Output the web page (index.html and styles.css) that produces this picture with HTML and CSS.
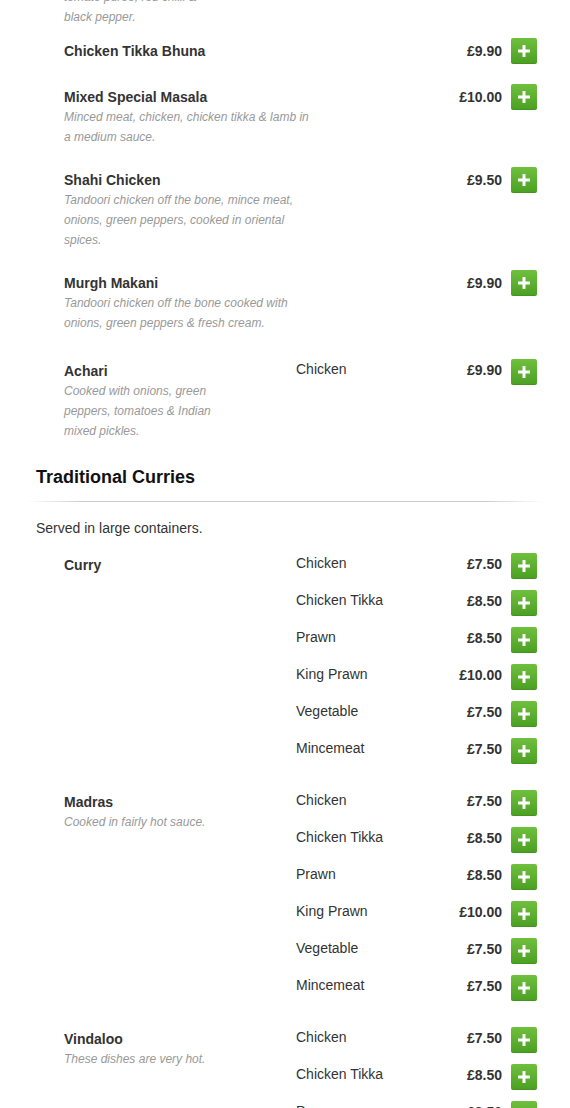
FILE: index.html
```html
<!DOCTYPE html>
<html lang="en">
<head>
<meta charset="utf-8">
<title>Menu</title>
<link rel="stylesheet" href="styles.css">
</head>
<body>
<div class="menu">
  <div class="partial">
    <p class="desc">tomato puree, red chilli &amp;<br>black pepper.</p>
  </div>

  <div class="item">
    <div class="info"><div class="name">Chicken Tikka Bhuna</div></div>
    <div class="buy"><span class="price">£9.90</span><button class="add" aria-label="Add"><svg viewBox="0 0 26 26" width="26" height="26"><rect x="7" y="11.5" width="12" height="3" fill="#fff"/><rect x="11.5" y="7" width="3" height="12" fill="#fff"/></svg></button></div>
  </div>

  <div class="item">
    <div class="info"><div class="name">Mixed Special Masala</div><p class="desc">Minced meat, chicken, chicken tikka &amp; lamb in a medium sauce.</p></div>
    <div class="buy"><span class="price">£10.00</span><button class="add" aria-label="Add"><svg viewBox="0 0 26 26" width="26" height="26"><rect x="7" y="11.5" width="12" height="3" fill="#fff"/><rect x="11.5" y="7" width="3" height="12" fill="#fff"/></svg></button></div>
  </div>

  <div class="item">
    <div class="info"><div class="name">Shahi Chicken</div><p class="desc">Tandoori chicken off the bone, mince meat, onions, green peppers, cooked in oriental spices.</p></div>
    <div class="buy"><span class="price">£9.50</span><button class="add" aria-label="Add"><svg viewBox="0 0 26 26" width="26" height="26"><rect x="7" y="11.5" width="12" height="3" fill="#fff"/><rect x="11.5" y="7" width="3" height="12" fill="#fff"/></svg></button></div>
  </div>

  <div class="item">
    <div class="info"><div class="name">Murgh Makani</div><p class="desc">Tandoori chicken off the bone cooked with onions, green peppers &amp; fresh cream.</p></div>
    <div class="buy"><span class="price">£9.90</span><button class="add" aria-label="Add"><svg viewBox="0 0 26 26" width="26" height="26"><rect x="7" y="11.5" width="12" height="3" fill="#fff"/><rect x="11.5" y="7" width="3" height="12" fill="#fff"/></svg></button></div>
  </div>

  <div class="vitem first">
    <div class="vinfo"><div class="name">Achari</div><p class="desc">Cooked with onions, green peppers, tomatoes &amp; Indian mixed pickles.</p></div>
    <div class="vars">
      <div class="vrow"><span class="vname">Chicken</span><span class="price">£9.90</span><button class="add" aria-label="Add"><svg viewBox="0 0 26 26" width="26" height="26"><rect x="7" y="11.5" width="12" height="3" fill="#fff"/><rect x="11.5" y="7" width="3" height="12" fill="#fff"/></svg></button></div>
    </div>
  </div>

  <h2 class="section-title">Traditional Curries</h2>
  <hr class="divider">
  <p class="section-note">Served in large containers.</p>

  <div class="vitem">
    <div class="vinfo"><div class="name">Curry</div></div>
    <div class="vars">
      <div class="vrow"><span class="vname">Chicken</span><span class="price">£7.50</span><button class="add" aria-label="Add"><svg viewBox="0 0 26 26" width="26" height="26"><rect x="7" y="11.5" width="12" height="3" fill="#fff"/><rect x="11.5" y="7" width="3" height="12" fill="#fff"/></svg></button></div>
      <div class="vrow"><span class="vname">Chicken Tikka</span><span class="price">£8.50</span><button class="add" aria-label="Add"><svg viewBox="0 0 26 26" width="26" height="26"><rect x="7" y="11.5" width="12" height="3" fill="#fff"/><rect x="11.5" y="7" width="3" height="12" fill="#fff"/></svg></button></div>
      <div class="vrow"><span class="vname">Prawn</span><span class="price">£8.50</span><button class="add" aria-label="Add"><svg viewBox="0 0 26 26" width="26" height="26"><rect x="7" y="11.5" width="12" height="3" fill="#fff"/><rect x="11.5" y="7" width="3" height="12" fill="#fff"/></svg></button></div>
      <div class="vrow"><span class="vname">King Prawn</span><span class="price">£10.00</span><button class="add" aria-label="Add"><svg viewBox="0 0 26 26" width="26" height="26"><rect x="7" y="11.5" width="12" height="3" fill="#fff"/><rect x="11.5" y="7" width="3" height="12" fill="#fff"/></svg></button></div>
      <div class="vrow"><span class="vname">Vegetable</span><span class="price">£7.50</span><button class="add" aria-label="Add"><svg viewBox="0 0 26 26" width="26" height="26"><rect x="7" y="11.5" width="12" height="3" fill="#fff"/><rect x="11.5" y="7" width="3" height="12" fill="#fff"/></svg></button></div>
      <div class="vrow"><span class="vname">Mincemeat</span><span class="price">£7.50</span><button class="add" aria-label="Add"><svg viewBox="0 0 26 26" width="26" height="26"><rect x="7" y="11.5" width="12" height="3" fill="#fff"/><rect x="11.5" y="7" width="3" height="12" fill="#fff"/></svg></button></div>
    </div>
  </div>

  <div class="vitem">
    <div class="vinfo"><div class="name">Madras</div><p class="desc">Cooked in fairly hot sauce.</p></div>
    <div class="vars">
      <div class="vrow"><span class="vname">Chicken</span><span class="price">£7.50</span><button class="add" aria-label="Add"><svg viewBox="0 0 26 26" width="26" height="26"><rect x="7" y="11.5" width="12" height="3" fill="#fff"/><rect x="11.5" y="7" width="3" height="12" fill="#fff"/></svg></button></div>
      <div class="vrow"><span class="vname">Chicken Tikka</span><span class="price">£8.50</span><button class="add" aria-label="Add"><svg viewBox="0 0 26 26" width="26" height="26"><rect x="7" y="11.5" width="12" height="3" fill="#fff"/><rect x="11.5" y="7" width="3" height="12" fill="#fff"/></svg></button></div>
      <div class="vrow"><span class="vname">Prawn</span><span class="price">£8.50</span><button class="add" aria-label="Add"><svg viewBox="0 0 26 26" width="26" height="26"><rect x="7" y="11.5" width="12" height="3" fill="#fff"/><rect x="11.5" y="7" width="3" height="12" fill="#fff"/></svg></button></div>
      <div class="vrow"><span class="vname">King Prawn</span><span class="price">£10.00</span><button class="add" aria-label="Add"><svg viewBox="0 0 26 26" width="26" height="26"><rect x="7" y="11.5" width="12" height="3" fill="#fff"/><rect x="11.5" y="7" width="3" height="12" fill="#fff"/></svg></button></div>
      <div class="vrow"><span class="vname">Vegetable</span><span class="price">£7.50</span><button class="add" aria-label="Add"><svg viewBox="0 0 26 26" width="26" height="26"><rect x="7" y="11.5" width="12" height="3" fill="#fff"/><rect x="11.5" y="7" width="3" height="12" fill="#fff"/></svg></button></div>
      <div class="vrow"><span class="vname">Mincemeat</span><span class="price">£7.50</span><button class="add" aria-label="Add"><svg viewBox="0 0 26 26" width="26" height="26"><rect x="7" y="11.5" width="12" height="3" fill="#fff"/><rect x="11.5" y="7" width="3" height="12" fill="#fff"/></svg></button></div>
    </div>
  </div>

  <div class="vitem">
    <div class="vinfo"><div class="name">Vindaloo</div><p class="desc">These dishes are very hot.</p></div>
    <div class="vars">
      <div class="vrow"><span class="vname">Chicken</span><span class="price">£7.50</span><button class="add" aria-label="Add"><svg viewBox="0 0 26 26" width="26" height="26"><rect x="7" y="11.5" width="12" height="3" fill="#fff"/><rect x="11.5" y="7" width="3" height="12" fill="#fff"/></svg></button></div>
      <div class="vrow"><span class="vname">Chicken Tikka</span><span class="price">£8.50</span><button class="add" aria-label="Add"><svg viewBox="0 0 26 26" width="26" height="26"><rect x="7" y="11.5" width="12" height="3" fill="#fff"/><rect x="11.5" y="7" width="3" height="12" fill="#fff"/></svg></button></div>
      <div class="vrow"><span class="vname">Prawn</span><span class="price">£8.50</span><button class="add" aria-label="Add"><svg viewBox="0 0 26 26" width="26" height="26"><rect x="7" y="11.5" width="12" height="3" fill="#fff"/><rect x="11.5" y="7" width="3" height="12" fill="#fff"/></svg></button></div>
      <div class="vrow"><span class="vname">King Prawn</span><span class="price">£10.00</span><button class="add" aria-label="Add"><svg viewBox="0 0 26 26" width="26" height="26"><rect x="7" y="11.5" width="12" height="3" fill="#fff"/><rect x="11.5" y="7" width="3" height="12" fill="#fff"/></svg></button></div>
    </div>
  </div>
</div>
</body>
</html>
```

FILE: styles.css
```css
html, body {
  margin: 0;
  padding: 0;
  background: #fff;
}

body {
  font-family: "Liberation Sans", Arial, sans-serif;
  color: #333;
  overflow: hidden;
}

.menu {
  margin-top: -13px;
  padding: 0 33px 0 36px;
}

p {
  margin: 0;
}

.partial {
  padding: 0 0 11px 28px;
}

.desc {
  font-size: 12px;
  font-style: italic;
  line-height: 20px;
  color: #999;
}

.name {
  font-size: 14px;
  font-weight: bold;
  line-height: 20px;
  color: #333;
}

.item {
  display: flex;
  align-items: flex-start;
  padding: 0 0 20px 28px;
}

.info {
  width: 250px;
  padding-top: 3px;
}

.buy {
  margin-left: auto;
  display: flex;
  align-items: center;
}

.price {
  font-size: 14px;
  font-weight: bold;
  line-height: 22px;
  color: #333;
  margin-right: 9px;
}

.add {
  display: block;
  width: 26px;
  height: 26px;
  padding: 0;
  border: 0;
  border-radius: 2px;
  background: linear-gradient(#70c03e, #4a9f22);
  box-shadow: inset 0 -1px 0 rgba(0, 0, 0, 0.08);
  cursor: pointer;
}

.add svg {
  display: block;
}

.vitem {
  display: flex;
  align-items: flex-start;
  padding: 0 0 15px 28px;
}

.vitem.first {
  margin-top: 6px;
}

.vinfo {
  flex: 0 0 175px;
  margin-right: 57px;
  padding-top: 2px;
}

.vars {
  flex: 1;
}

.vrow {
  display: flex;
  align-items: flex-start;
  margin-bottom: 11px;
}

.vname {
  font-size: 14px;
  line-height: 20px;
  color: #333;
}

.vrow .price {
  margin-left: auto;
}

.section-title {
  margin: 10px 0 0;
  font-size: 18px;
  line-height: 22px;
  font-weight: bold;
  color: #111;
}

.divider {
  height: 1px;
  border: 0;
  margin: 13px -7px 0 -10px;
  background: linear-gradient(to right, rgba(200, 200, 200, 0), #c8c8c8 12%, #c8c8c8 88%, rgba(200, 200, 200, 0));
}

.section-note {
  margin: 16px 0 15px;
  font-size: 14px;
  line-height: 20px;
  color: #333;
}
```
